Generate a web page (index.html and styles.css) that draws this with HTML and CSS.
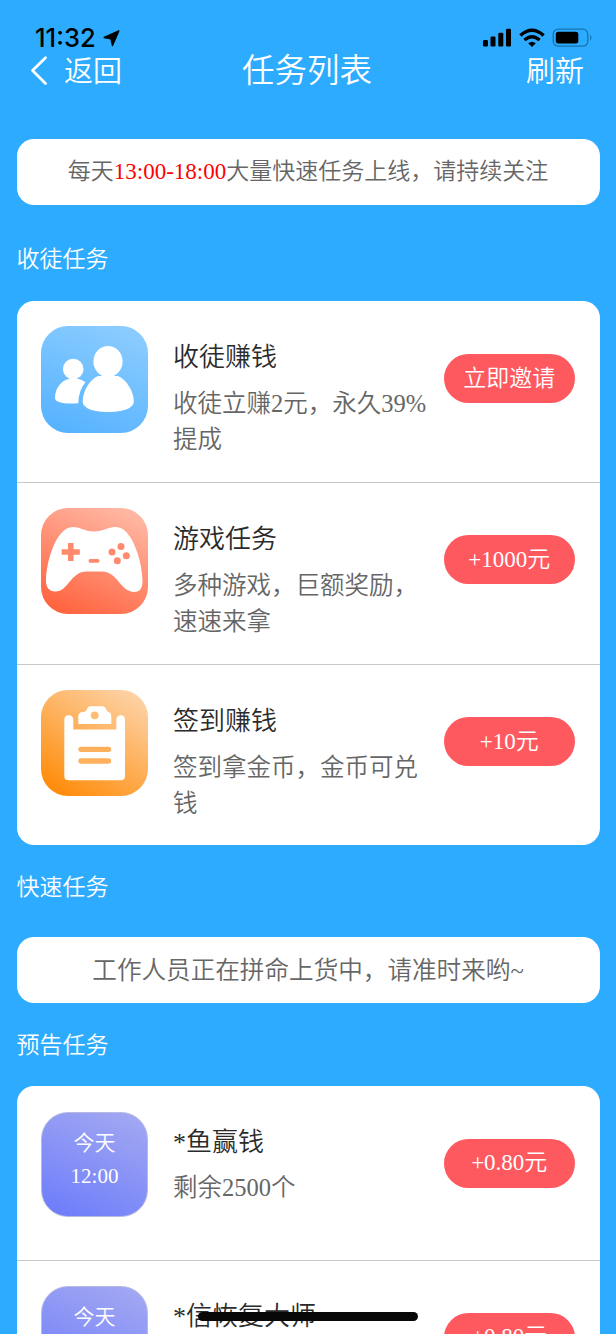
FILE: index.html
```html
<!DOCTYPE html>
<html lang="zh-CN">
<head>
<meta charset="utf-8">
<title>任务列表</title>
<link rel="stylesheet" href="styles.css">
</head>
<body>
<div class="screen">
  <div class="statusbar">
    <div class="clock">11:32
      <svg width="17" height="17" viewBox="0 0 17 17"><path d="M15.8 1 L1.2 7.5 L8 8.900 L9.500 15.500 Z" fill="#000" stroke="#000" stroke-width="1.400" stroke-linejoin="round"/></svg>
    </div>
    <svg class="indicators" width="112" height="20" viewBox="0 0 112 20">
      <rect x="1" y="12" width="5" height="6.5" rx="1.3"/>
      <rect x="8.5" y="8.5" width="5" height="10" rx="1.3"/>
      <rect x="16.3" y="4.7" width="5" height="13.8" rx="1.3"/>
      <rect x="24" y="0.8" width="5" height="17.7" rx="1.3"/>
      <g fill="none" stroke="#000" stroke-width="3.4">
        <path d="M38.4 7.5 Q50 -2.8 61.6 7.5"/>
        <path d="M42.4 12 Q50 5.4 57.6 12"/>
      </g>
      <path d="M46.2 15.3 Q50 12.2 53.8 15.3 L50 19 Z"/>
      <rect x="71.2" y="1.2" width="34.6" height="17" rx="5" fill="none" stroke="#1674ae" stroke-width="1.3"/>
      <rect x="73.8" y="3.8" width="22.5" height="11.8" rx="2.5"/>
      <path d="M108.2 6.5 Q110.8 9.7 108.2 13 Z" fill="#1674ae"/>
    </svg>
  </div>
  <header class="navbar">
    <div class="nav-back">
      <svg width="18" height="32" viewBox="0 0 18 32"><path d="M15.500 2.800 L2.500 15.500 L15.500 28.500" fill="none" stroke="#fff" stroke-width="2.8" stroke-linecap="round" stroke-linejoin="round"/></svg>
      <span>返回</span>
    </div>
    <h1 class="nav-title">任务列表</h1>
    <div class="nav-refresh">刷新</div>
  </header>

  <main class="content">
    <div class="card notice">每天<span class="hot">13:00-18:00</span>大量快速任务上线，请持续关注</div>

    <h2 class="section section-first">收徒任务</h2>
    <div class="card">
      <div class="task">
        <svg class="tile" viewBox="0 0 107 107">
          <defs><linearGradient id="blue" x1=".7" y1="0" x2=".3" y2="1"><stop offset="0" stop-color="#8accff"/><stop offset="1" stop-color="#58b3ff"/></linearGradient></defs>
          <rect width="107" height="107" rx="27" fill="url(#blue)"/>
          <g fill="#fff">
            <circle cx="32.2" cy="43" r="10.3"/>
            <path d="M14 72 C14 61 22 52.3 32 52.3 Q39 52.3 44.5 56.2 Q37.5 64 37.3 77.3 Q14 78.500 14 72 Z"/>
            <ellipse cx="67" cy="35.500" rx="14.600" ry="15.400"/>
            <path d="M57 50 H77 C86 54 92.800 66 92.800 75.500 C92.800 82.500 81 86 67 86 C53 86 41.700 82.500 41.700 75.500 C41.700 66 48 54 57 50 Z"/>
          </g>
        </svg>
        <div class="info"><h3>收徒赚钱</h3><p>收徒立赚2元，永久39%提成</p></div>
        <div class="pill">立即邀请</div>
      </div>
      <div class="task task-middle">
        <svg class="tile tile-short" viewBox="0 0 107 106">
          <defs><linearGradient id="coral" x1=".75" y1="0" x2=".3" y2="1"><stop offset="0" stop-color="#ffb8a4"/><stop offset="1" stop-color="#ff6541"/></linearGradient></defs>
          <rect width="107" height="106" rx="27" fill="url(#coral)"/>
          <path d="M32 19 C40 19 43 23.500 53 23.500 C63 23.500 66 19 75 19 C91 19 101.500 54 101.500 73 C101.500 80 99 84 93.500 84 C79 84 77 63.500 61 63.500 H46 C29 63.500 28 83.500 14 83.500 C8 83.500 5 79 5 73 C5 54 15 19 32 19 Z" fill="#fff"/>
          <g fill="#ff8a6e">
            <path d="M27 35 h5.500 v6.300 h6.300 v5.500 h-6.300 v6.300 h-5.500 v-6.300 h-6.300 v-5.500 h6.300 z"/>
            <rect x="47.500" y="51" width="11" height="3.800" rx="1.900"/>
            <circle cx="80" cy="38.500" r="3.500"/><circle cx="71" cy="44" r="3.500"/><circle cx="85.300" cy="47.700" r="3.500"/><circle cx="76.300" cy="52.700" r="3.500"/>
          </g>
        </svg>
        <div class="info"><h3>游戏任务</h3><p>多种游戏，巨额奖励，速速来拿</p></div>
        <div class="pill">+1000元</div>
      </div>
      <div class="task">
        <svg class="tile tile-short" viewBox="0 0 107 106">
          <defs><linearGradient id="orange" x1=".85" y1="0" x2=".2" y2="1"><stop offset="0" stop-color="#fdd3a8"/><stop offset="1" stop-color="#ff8c0a"/></linearGradient></defs>
          <rect width="107" height="106" rx="27" fill="url(#orange)"/>
          <path d="M27.500 25.300 Q32.300 25.300 32.300 30 V39.500 H75.300 V30 Q75.300 25.300 80 25.300 Q84 25.300 84 30 V86 Q84 90.300 79.500 90.300 H27.500 Q23.300 90.300 23.300 86 V30 Q23.300 25.300 27.500 25.300 Z" fill="#fff"/>
          <path d="M37.300 34 V27 Q37.300 22 42 22 Q45.500 22 46.300 18.500 Q47 16.300 49 16.300 H62 Q64 16.300 65 19 Q66 22 68 22.300 Q70.300 23 70.300 27 V34 Z" fill="#fff"/>
          <circle cx="53.700" cy="25.300" r="3.900" fill="#ffbd72"/>
          <g stroke="#ffb05c" stroke-width="5.300" stroke-linecap="round"><path d="M40 59.300 H67.500"/><path d="M40 71 H67.500"/></g>
        </svg>
        <div class="info"><h3>签到赚钱</h3><p>签到拿金币，金币可兑钱</p></div>
        <div class="pill">+10元</div>
      </div>
    </div>

    <h2 class="section">快速任务</h2>
    <div class="card notice notice-empty">工作人员正在拼命上货中，请准时来哟~</div>

    <h2 class="section">预告任务</h2>
    <div class="card">
      <div class="task task-upcoming">
        <div class="tile tile-time"><span>今天</span><span>12:00</span></div>
        <div class="info"><h3>*鱼赢钱</h3><p>剩余2500个</p></div>
        <div class="pill">+0.80元</div>
      </div>
      <div class="task task-upcoming">
        <div class="tile tile-time"><span>今天</span></div>
        <div class="info"><h3>*信恢复大师</h3></div>
        <div class="pill">+0.80元</div>
      </div>
    </div>
  </main>
  <div class="home-indicator"></div>
</div>
</body>
</html>
```
FILE: styles.css
```css
* { box-sizing: border-box; }

body {
  margin: 0;
  background: #2dacff;
  font-family: "Liberation Serif", "Noto Sans CJK SC", serif;
  font-weight: 350;
}

h1, h2, h3, p { margin: 0; font-weight: inherit; }

.screen {
  position: relative;
  width: 616px;
  height: 1334px;
  overflow: hidden;
  background: #2dacff;
}

.statusbar {
  display: flex;
  justify-content: space-between;
  height: 50px;
  padding: 28px 22px 0 35px;
}

.clock {
  display: flex;
  align-items: center;
  gap: 7px;
  height: 20px;
  font: 500 25.5px/20px Inter, sans-serif;
}

.indicators { flex: none; }

.navbar {
  display: grid;
  grid-template-columns: 1fr auto 1fr;
  align-items: center;
  height: 42px;
  padding: 0 32px 0 30px;
  color: #fff;
  font-size: 29px;
  line-height: 42px;
}

.nav-back { display: flex; align-items: center; gap: 16px; }
.nav-back span, .nav-refresh { padding-top: 2px; line-height: 40px; }
.nav-title { font-size: 32.5px; line-height: 38px; }
.nav-refresh { text-align: right; }

.content { padding: 47px 16.5px 0; }

.card {
  overflow: hidden;
  border-radius: 17px;
  background: #fff;
}

.notice {
  height: 66px;
  color: #666;
  font-size: 23px;
  line-height: 66px;
  text-align: center;
}

.notice-empty { font-size: 24.6px; line-height: 68px; }
.hot { color: #f00; }

.section {
  height: 92px;
  padding-top: 27px;
  color: #fff;
  font-size: 23px;
  line-height: 32px;
}

.section-first { height: 96px; padding-top: 39px; }
.notice-empty + .section { height: 83px; }

.task {
  display: flex;
  align-items: flex-start;
  height: 181px;
  padding: 25px 24.5px 0;
  border-top: 1px solid #c8c8c8;
}

.task-middle { height: 182px; }
.task:first-child { padding-top: 24px; border-top-color: transparent; }

.tile { flex: none; width: 107px; height: 107px; }
.tile-short { height: 106px; }

.info { width: 259px; margin: 13px 0 0 25px; }
.info h3 { color: #2b2b2b; font-size: 26px; line-height: 38px; }
.info p { margin-top: 9px; color: #666; font-size: 24.5px; line-height: 36px; }

.pill {
  flex: none;
  width: 131.5px;
  height: 49px;
  margin: 27px 0 0 11.5px;
  border-radius: 25px;
  background: #ff5960;
  color: #fff;
  font-size: 23px;
  line-height: 49px;
  text-align: center;
}

.task:first-child .pill { margin-top: 28px; }

.task-upcoming, .task-upcoming:first-child { height: 174px; padding-top: 25px; }
.task-upcoming .info { margin-top: 12px; }
.task-upcoming .info p { margin-top: 8px; }
.task-upcoming:first-child .pill { margin-top: 27px; }
.task-upcoming .pill { line-height: 47px; }

.tile-time {
  display: flex;
  flex-direction: column;
  align-items: center;
  height: 105px;
  padding-top: 14px;
  border: 1px solid #b5b9e4;
  border-radius: 27px;
  background: linear-gradient(205deg, #a5aaf1, #6b7bfb);
  color: #fff;
  font-size: 21px;
  line-height: 33px;
}

.home-indicator {
  position: absolute;
  top: 1312px;
  left: 198px;
  width: 220px;
  height: 9px;
  border-radius: 5px;
  background: #080808;
}
```
